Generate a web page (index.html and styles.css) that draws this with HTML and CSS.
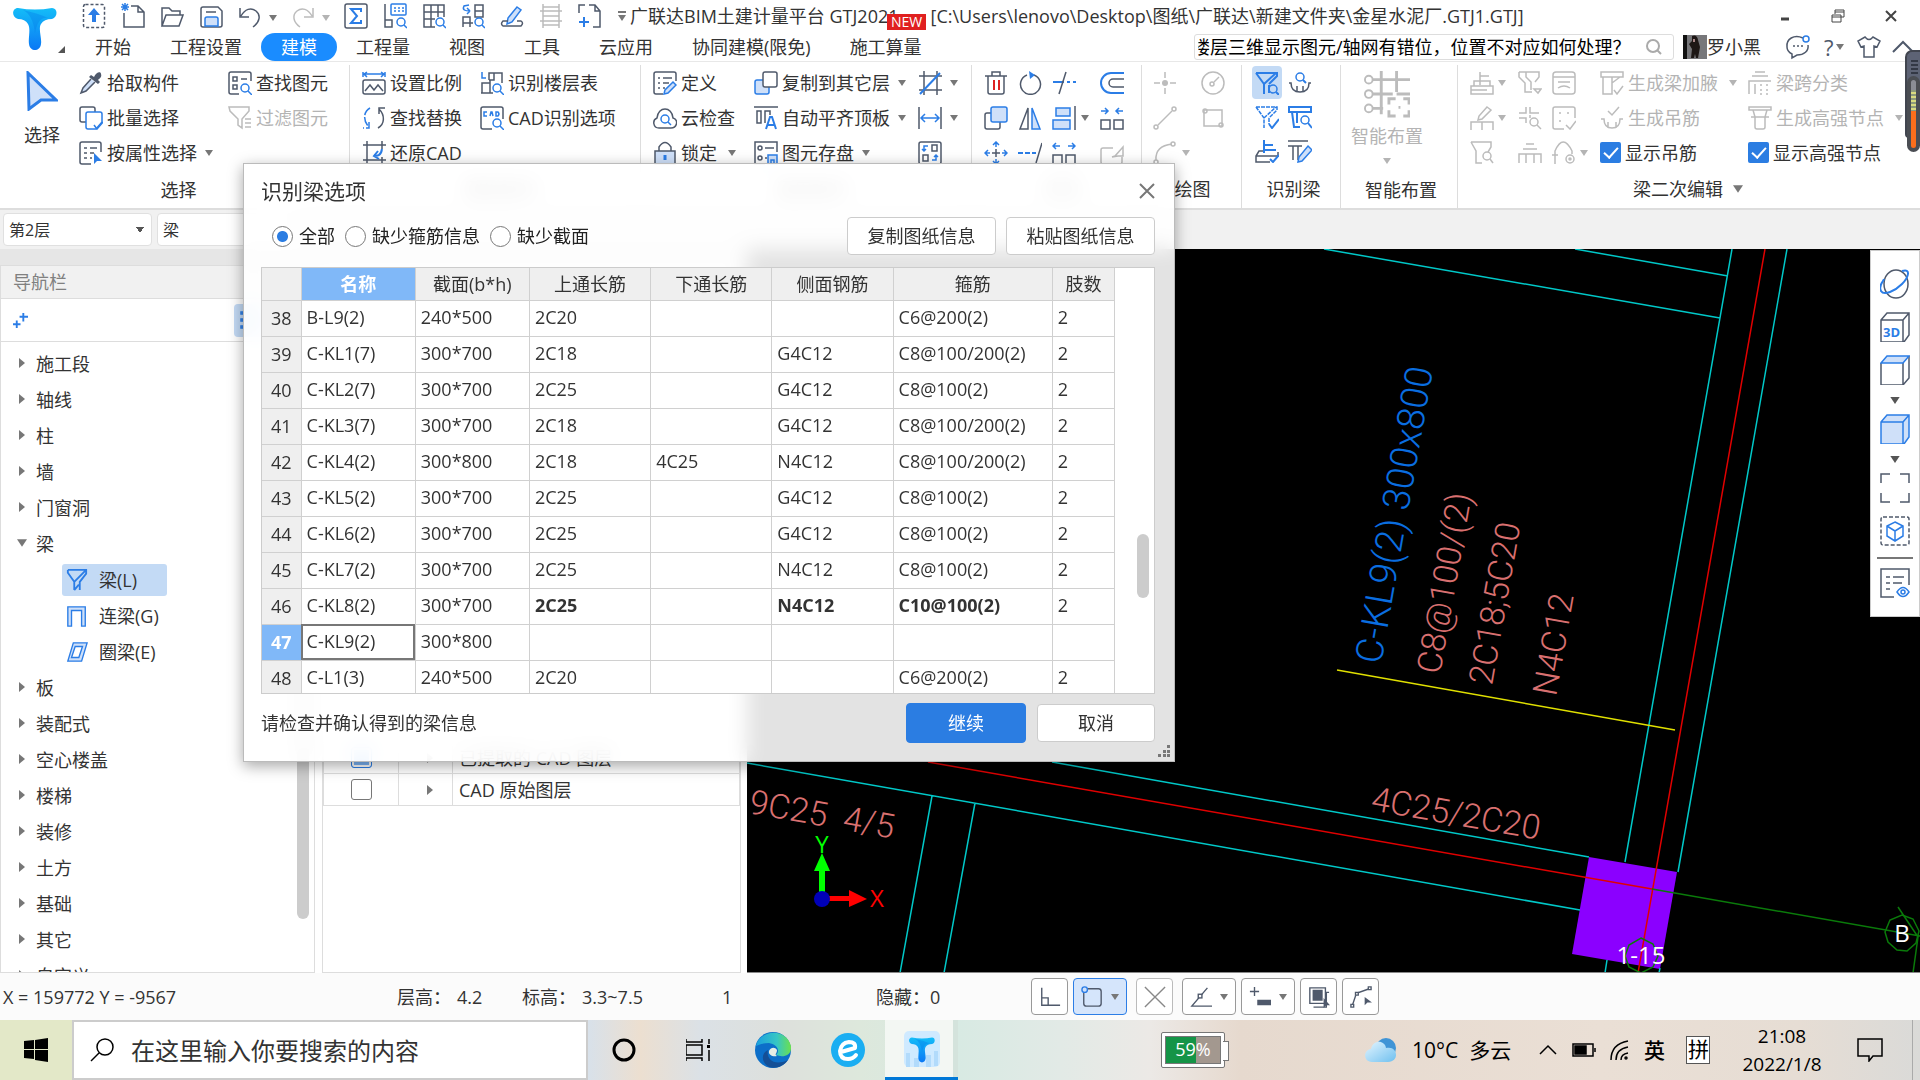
FILE: index.html
```html
<!DOCTYPE html>
<html lang="zh-CN">
<head>
<meta charset="utf-8">
<title>广联达BIM土建计量平台</title>
<link rel="stylesheet" href="styles.css">
</head>
<body>
<svg class="defs" aria-hidden="true">
<defs>
<linearGradient id="tg" x1="0" y1="0" x2="0" y2="1"><stop offset="0" stop-color="#14bdf8"/><stop offset="1" stop-color="#0b78f5"/></linearGradient>
<linearGradient id="eg" x1="0" y1="0" x2="1" y2="0"><stop offset="0" stop-color="#1ba0de"/><stop offset=".6" stop-color="#36c6c4"/><stop offset="1" stop-color="#6be04e"/></linearGradient>
<linearGradient id="cg" x1="0" y1="0" x2="1" y2="1"><stop offset="0" stop-color="#e4f5ff"/><stop offset="1" stop-color="#6fc0ef"/></linearGradient>
<symbol id="upload" viewBox="0 0 24 26"><rect class="g" x="1.500" y="1.500" width="21" height="23" rx="2" stroke-dasharray="3 2"/><path class="bf" d="M12 5l6 7h-4v7h-4v-7H6z"/></symbol>
<symbol id="new" viewBox="0 0 24 26"><path class="g" d="M10 3h7l6 6v15H3V10M17 3v6h6"/><path class="b" d="M1 1l6 6M7 1L1 7M4 0v8M0 4h8"/></symbol>
<symbol id="open" viewBox="0 0 24 26"><path class="g" d="M2 23V5h7l3 3h8v4M2 23L6 12h17l-4 11z"/></symbol>
<symbol id="save" viewBox="0 0 24 26"><path class="g" d="M4 4h15l4 4v14a2 2 0 0 1-2 2H4a2 2 0 0 1-2-2V6a2 2 0 0 1 2-2zM7 9h10"/><path class="b f" d="M6 23v-7a2 2 0 0 1 2-2h9a2 2 0 0 1 2 2v7z"/></symbol>
<symbol id="undo" viewBox="0 0 24 26"><path class="g" d="M2 5v9h9M3 13C7 6 13 4 18 8s4 11-3 16"/></symbol>
<symbol id="redo" viewBox="0 0 24 26"><path class="g" d="M22 5v9h-9M21 13C17 6 11 4 6 8s-4 11 3 16"/></symbol>
<symbol id="sum" viewBox="0 0 24 26"><rect class="g" x="1" y="1" width="22" height="24" rx="2"/><path class="b" d="M17 9V6H7l6 7-6 7h10v-3" stroke-width="2"/></symbol>
<symbol id="layer-q" viewBox="0 0 24 26"><path class="g" d="M2 1v23h7v-7H2"/><rect class="b" x="8" y="1" width="15" height="11" rx="1"/><path class="b" d="M11 5h2m2 0h2m2 0h2M11 8h2m2 0h2m2 0h2"/><circle class="b" cx="18" cy="19" r="4"/><path class="b" d="M21 22l3 3"/></symbol>
<symbol id="grid-q" viewBox="0 0 24 26"><path class="g" d="M13 24H2V2h20v12M2 9h20M2 16h11M9 2v22M16 2v12"/><circle class="b" cx="18" cy="19" r="4"/><path class="b" d="M21 22l3 3"/></symbol>
<symbol id="swap-q" viewBox="0 0 24 26"><path class="g" d="M14 2h8v12h-8zM14 8h8M2 24V14h7v10M2 20h10"/><path class="b" d="M9 8c-5 0-8-1-6-5l5-1M9 8L6 5m3 3l-3 3"/><circle class="b" cx="18" cy="19" r="4"/><path class="b" d="M21 22l3 3"/></symbol>
<symbol id="pencil" viewBox="0 0 24 26"><path class="b f" d="M17 4l4 3-9 12-5 2 1-6z"/><path class="g" d="M8 18H3q-3 3 0 5h18q3-3 0-5h-4"/></symbol>
<symbol id="ladder" viewBox="0 0 24 26"><path class="g" d="M4 1v24M20 1v24M4 4h16M1 8h22M4 13h16M1 18h22M4 22h16"/></symbol>
<symbol id="addpage" viewBox="0 0 24 26"><path class="g" d="M1 10V2h6M11 2h6l5 6v16h-7M17 2v6h5"/><path class="b" d="M6 14v10M1 19h10" stroke-width="2"/></symbol>
<symbol id="pick" viewBox="0 0 24 24"><path class="gf" d="M12 4l3 2c2-5 7-6 7-3 1 3-1 4-3 6l2 2-2 2-9-7z"/><path class="g f" d="M12 8L4 17l-2 5 5-2 9-9"/></symbol>
<symbol id="multi" viewBox="0 0 24 24"><rect class="g" x="1" y="1" width="15" height="15" rx="2"/><path class="b w" d="M9 6h12a2 2 0 0 1 2 2v8l-6 7H9a2 2 0 0 1-2-2V8a2 2 0 0 1 2-2z"/><path class="b" d="M15 19l3 4 6-7"/></symbol>
<symbol id="prop" viewBox="0 0 24 24"><path class="g" d="M12 23H3a2 2 0 0 1-2-2V3a2 2 0 0 1 2-2h17a2 2 0 0 1 2 2v8M5 7h3m3 0h7M5 12h3m3 0h4M5 17h3m3 0h2"/><path class="bf" d="M15 12v11l3-3h5z"/></symbol>
<symbol id="find" viewBox="0 0 24 24"><path class="g" d="M11 23H3a2 2 0 0 1-2-2V3a2 2 0 0 1 2-2h18a2 2 0 0 1 2 2v7M5 6h4v4H5zM5 14h4v4H5zM13 8h6"/><circle class="b" cx="17" cy="17" r="4"/><path class="b" d="M20 20l4 4"/></symbol>
<symbol id="filter" viewBox="0 0 24 24"><path class="g" d="M1 1h20v4l-7 8v9l-4-3v-6L2 5zM17 13h6m-6 4h6m-6 4h6"/></symbol>
<symbol id="scale" viewBox="0 0 24 24"><path class="b" d="M1 1v5m22-5v5M2 3h20M5 1L2 3l3 3M19 1l3 2-3 3"/><rect class="g" x="1" y="9" width="22" height="14" rx="2"/><path class="g" d="M3 20l5-6 4 5 4-5 5 6"/></symbol>
<symbol id="replace" viewBox="0 0 24 24"><path class="b" d="M8 2C1 6 1 15 7 21m0-5v6H1" stroke-dasharray="9 2"/><path class="g" d="M16 22c7-4 7-13 1-19m0 5V2h6"/></symbol>
<symbol id="restore" viewBox="0 0 24 24"><path class="g" d="M5 0v22M1 4h23M20 0v8M1 19h23M20 16v8"/><path class="b" d="M20 8c-1 7-5 7-8 7m4-5l-4 5 5 3" stroke-width="2"/></symbol>
<symbol id="floors" viewBox="0 0 24 24"><path class="b" d="M2 1v6h4"/><path class="g" d="M9 9V2h13v10M9 9h5V2M2 22V12h8v10M1 22h12M10 12V9"/><circle class="b" cx="17" cy="17" r="4"/><path class="b" d="M20 20l4 4"/></symbol>
<symbol id="cad" viewBox="0 0 24 24"><path class="g" d="M12 23H3a2 2 0 0 1-2-2V3a2 2 0 0 1 2-2h18a2 2 0 0 1 2 2v10"/><path class="b" d="M7 6H4v4h3M10 10l1-4h1l1 4M16 6v4h2q2-2 0-4z"/><circle class="b" cx="17" cy="17" r="4"/><path class="b" d="M20 20l4 4"/></symbol>
<symbol id="define" viewBox="0 0 24 24"><path class="g" d="M10 23H3a2 2 0 0 1-2-2V3a2 2 0 0 1 2-2h18a2 2 0 0 1 2 2v7M5 7h2m3 0h9M5 12h2m3 0h6M5 17h2m3 0h2"/><path class="b f" d="M20 11l3 3-8 8-4 1 1-4z"/></symbol>
<symbol id="cloud" viewBox="0 0 24 24"><path class="g" d="M6 22c-6 0-7-8-2-10C5 0 19 0 20 12c6 2 4 10-2 10z"/><circle class="b" cx="12" cy="13" r="4"/><path class="b" d="M15 16l3 3"/></symbol>
<symbol id="lock" viewBox="0 0 24 24"><path class="g f" d="M2 10h20v13H2z"/><path class="g" d="M6 10V6q6-9 12 0v4"/><path class="b" d="M12 14v5" stroke-width="3"/></symbol>
<symbol id="copyto" viewBox="0 0 24 24"><path class="b f" d="M10 9H3a2 2 0 0 0-2 2v10a2 2 0 0 0 2 2h10a2 2 0 0 0 2-2v-5z"/><rect class="g w" x="9" y="1" width="14" height="15" rx="2"/></symbol>
<symbol id="align" viewBox="0 0 24 24"><path class="g" d="M0 1h24M3 5h4v12H3zM11 17V5h5v4"/><path class="b" d="M12 23l4-12h2l4 12M14 19h7" stroke-width="2"/></symbol>
<symbol id="store" viewBox="0 0 24 24"><path class="g" d="M11 23H1V1h22v10M11 7h9M11 17h2"/><rect class="g" x="4" y="5" width="4" height="4" rx="2"/><rect class="g" x="4" y="15" width="4" height="4" rx="2"/><path class="b f" d="M14 14h9v9h-9zM17 23v-4h3v4"/></symbol>
<symbol id="axis" viewBox="0 0 24 24"><path class="g" d="M6 0v24M19 0v24M1 5h23M1 19h23"/><path class="b" d="M2 23L22 2" stroke-width="2"/></symbol>
<symbol id="dim" viewBox="0 0 24 24"><path class="g" d="M1 1v22M23 1v22"/><path class="b" d="M3 12h18M7 8l-4 4 4 4M17 8l4 4-4 4"/></symbol>
<symbol id="convert" viewBox="0 0 24 24"><rect class="g" x="1" y="1" width="22" height="22" rx="2"/><path class="g" d="M14 4h5v6h-5zM5 14h5v6H5z"/><path class="b" d="M10 5H6v5m-2-2l2 2 2-2M14 19h4v-5m-2 2l2-2 2 2"/></symbol>
<symbol id="trash" viewBox="0 0 24 24"><path class="g" d="M1 5h22M8 5V1h8v4M4 5v16a2 2 0 0 0 2 2h12a2 2 0 0 0 2-2V5"/><path class="r" d="M10 9v10M15 9v10"/></symbol>
<symbol id="rotate" viewBox="0 0 24 24"><path class="g" d="M9 4a10 10 0 1 0 7 0"/><path class="bf" d="M11 0l6 4-5 4z"/></symbol>
<symbol id="trim" viewBox="0 0 24 24"><path class="b" d="M1 11h11m3 0h3m3 0h3" stroke-width="2"/><path class="g" d="M14 1L7 23"/></symbol>
<symbol id="offset" viewBox="0 0 24 24"><path class="b" d="M24 2H11a10 10 0 0 0 0 20h13" stroke-width="2"/><path class="g" d="M24 8H13a4 4 0 0 0 0 8h11"/></symbol>
<symbol id="copy" viewBox="0 0 24 24"><rect class="g" x="1" y="7" width="15" height="16" rx="2"/><rect class="b f" x="7" y="1" width="16" height="15" rx="2"/></symbol>
<symbol id="mirror" viewBox="0 0 24 24"><path class="g" d="M10 2v21H2z"/><path class="b f" d="M14 2v21h8z"/></symbol>
<symbol id="alignr" viewBox="0 0 24 24"><rect class="b f" x="4" y="2" width="14" height="8"/><rect class="b f" x="1" y="14" width="17" height="9"/><path class="g" d="M23 0v24"/></symbol>
<symbol id="merge" viewBox="0 0 24 24"><path class="g" d="M1 14h9v9H1zM14 14h9v9h-9z"/><path class="b" d="M1 5h7M5 2l3 3-3 3M23 5h-7M19 2l-3 3 3 3"/></symbol>
<symbol id="split" viewBox="0 0 24 24"><path class="g" d="M1 14h9v9H1zM14 14h9v9h-9z"/><path class="b" d="M1 5h7M4 2L1 5l3 3M23 5h-7M20 2l3 3-3 3"/></symbol>
<symbol id="move" viewBox="0 0 24 24"><path class="g" d="M12 8v8M8 12h8"/><path class="b" d="M12 6V1M9 4l3-3 3 3M12 18v5m-3-3l3 3 3-3M6 12H1m3-3l-3 3 3 3M18 12h5m-3-3l3 3-3 3"/></symbol>
<symbol id="extend" viewBox="0 0 24 24"><path class="b" d="M0 12h5m2 0h5m2 0h4" stroke-width="2"/><path class="g" d="M24 2l-6 20"/></symbol>
<symbol id="editbox" viewBox="0 0 24 24"><path class="g" d="M13 7H3q-2 0-2 2v12q0 2 2 2h17q2 0 2-2v-5M12 16l3-1 8-9v9h-5z"/></symbol>
<symbol id="point" viewBox="0 0 24 24"><path class="g" d="M12 1v6m0 10v6M1 12h6m10 0h6"/><circle class="gf" cx="12" cy="12" r="3"/></symbol>
<symbol id="circle" viewBox="0 0 24 24"><circle class="g" cx="12" cy="12" r="11"/><circle class="g" cx="11" cy="13" r="2"/><path class="g" d="M13 11l5-5"/></symbol>
<symbol id="line" viewBox="0 0 24 24"><path class="g" d="M5 19L19 5"/><circle class="g" cx="3" cy="21" r="2"/><circle class="g" cx="21" cy="3" r="2"/></symbol>
<symbol id="rect" viewBox="0 0 24 24"><rect class="g" x="3" y="4" width="18" height="16"/><circle class="g" cx="4" cy="5" r="2"/><circle class="g" cx="20" cy="19" r="2"/></symbol>
<symbol id="arc" viewBox="0 0 24 24"><path class="g" d="M3 19Q2 5 19 3"/><circle class="g" cx="3" cy="21" r="2"/><circle class="g" cx="20" cy="3" r="2"/></symbol>
<symbol id="beam-q" viewBox="0 0 24 24"><path class="b" d="M1 2h21v3l-8 8M1 2l8 11v10M9 13l12-11M14 14v8" stroke-width="2"/><circle class="b" cx="18" cy="18" r="4"/><path class="b" d="M21 21l3 3" stroke-width="2"/></symbol>
<symbol id="beam-c" viewBox="0 0 24 24"><path class="b" d="M1 2h21v3l-8 8M1 2l8 11v10M9 13l12-11M14 13v6" stroke-dasharray="4 1"/><path class="b" d="M14 19l3 4 7-9" stroke-width="2"/></symbol>
<symbol id="stamp" viewBox="0 0 24 24"><path class="g" d="M9 12H4l-3 5v6h14M1 17h22v-4"/><path class="b" d="M9 14V1M9 6h9M9 11h12M15 20l3 3 6-7" stroke-width="2"/></symbol>
<symbol id="hang-q" viewBox="0 0 24 24"><path class="g" d="M1 12h2q0 9 9 9t9-9h2M9 21v-6m6 6v-6"/><circle class="b" cx="12" cy="6" r="4"/><path class="b" d="M15 9l3 3" stroke-width="2"/></symbol>
<symbol id="plate-q" viewBox="0 0 24 24"><path class="b" d="M1 2h22v5H1zM4 7l2 15h6M9 7v11" stroke-width="2"/><circle class="b" cx="17" cy="15" r="4"/><path class="b" d="M20 18l4 5" stroke-width="2"/></symbol>
<symbol id="t-edit" viewBox="0 0 24 24"><path class="g" d="M0 2h20M0 7h14M5 7v14M10 7v14"/><path class="b f" d="M20 7l4 4-10 11-4 1 1-5z"/></symbol>
<symbol id="smart" viewBox="0 0 48 48"><path class="g" d="M18 0v45M34 0v22M8 9h40M8 24h18M8 39h12M26 24h4M34 24h14" stroke-width="3"/><circle class="g w" cx="5" cy="9" r="4" stroke-width="2"/><circle class="g w" cx="5" cy="24" r="4" stroke-width="2"/><circle class="g w" cx="5" cy="39" r="4" stroke-width="2"/><path class="g" d="M26 35v-6h7M41 29h6v6M47 41v6h-6M33 47h-7v-6M36 38h2" stroke-width="3"/></symbol>
<symbol id="s1" viewBox="0 0 24 24"><path class="g" d="M10 14V1M10 5h9M4 10h16v5H4zM1 15h22v8H1zM1 19h16"/></symbol>
<symbol id="s2" viewBox="0 0 24 24"><path class="g" d="M1 1h20v5l-4 5M1 1v5l6 6v9h7M8 1v5l5 5v8M16 18h7l-3 4z"/></symbol>
<symbol id="s3" viewBox="0 0 24 24"><rect class="g" x="1" y="1" width="22" height="22" rx="3"/><path class="g" d="M1 6h22M6 11h12M6 17q6-4 12 0"/></symbol>
<symbol id="s4" viewBox="0 0 24 24"><path class="g" d="M17 1l4 3-9 9-4 1 1-4zM1 24v-8h22v8M12 16v8"/></symbol>
<symbol id="s5" viewBox="0 0 24 24"><path class="g" d="M1 7h7V1M12 1v6h9M1 12h7v5M12 12V9"/><circle class="g" cx="16" cy="16" r="4"/><path class="g" d="M19 19l4 4"/></symbol>
<symbol id="s6" viewBox="0 0 24 24"><path class="g" d="M12 23H3a2 2 0 0 1-2-2V3a2 2 0 0 1 2-2h18a2 2 0 0 1 2 2v9M7 7h2m6 0h2M7 15h2M14 19l4 4 6-8"/></symbol>
<symbol id="s7" viewBox="0 0 24 24"><path class="g" d="M1 1h20v5l-3 5M1 1l5 9v12h6"/><circle class="g" cx="17" cy="15" r="4"/><path class="g" d="M20 18l3 4"/></symbol>
<symbol id="s8" viewBox="0 0 24 24"><path class="g" d="M8 3h8M5 8h14M1 22v-9h22v9M8 13v9m8-9v9"/></symbol>
<symbol id="s9" viewBox="0 0 24 24"><path class="g" d="M3 23V10q8-18 17 0v3M0 14h6"/><circle class="g" cx="18" cy="18" r="4"/><circle class="g" cx="18" cy="18" r="1"/></symbol>
<symbol id="s10" viewBox="0 0 24 24"><path class="g" d="M1 1h22v5H1zM3 6v17h9V6M12 12l8-6M14 19l3 4 6-8"/></symbol>
<symbol id="s11" viewBox="0 0 24 24"><path class="g" d="M1 13h3q0 9 8 9t8-9h3M8 22v-6m8 6v-6M8 5l4 4 7-8"/></symbol>
<symbol id="s12" viewBox="0 0 24 24"><path class="g" d="M7 1h10M4 5h16M1 23V10h22M7 23V13M12 14h2m4 0h2m-8 5h2m4 0h2m-8 4h2m4 0h2"/></symbol>
<symbol id="s13" viewBox="0 0 24 24"><path class="g" d="M1 1h22v3H1zM5 4l2 7h10l2-7M7 11v10q0 2 2 2h6q2 0 2-2V11M3 11h18"/></symbol>
<symbol id="beam" viewBox="0 0 24 24"><path class="b" d="M2 1h20v4l-7 9v9M2 1v3l7 10v9M22 1L9 14M9 23l5-6" stroke-width="2"/></symbol>
<symbol id="lbeam" viewBox="0 0 24 24"><path class="b f" d="M2 23V2h19v21h-4V6H6v17z"/></symbol>
<symbol id="rbeam" viewBox="0 0 24 24"><path class="b f" d="M8 2h15l-6 20H2zM10 6L6 18h8l4-12z" fill-rule="evenodd"/></symbol>
<symbol id="orbit" viewBox="0 0 30 30"><ellipse class="g" cx="16" cy="15" rx="12" ry="14"/><path class="b" d="M22 2c9-3 7 6 0 13S4 27 1 22s2-9 3-12" stroke-width="2"/></symbol>
<symbol id="box3d" viewBox="0 0 30 30"><path class="g" d="M1 8l6-7h22v22l-5 7H1zM1 8h22v22M23 8l6-7"/></symbol>
<symbol id="boxtop" viewBox="0 0 30 30"><path class="g" d="M1 8v22h22l6-7V1M23 8v22"/><path class="b f" d="M1 8l6-7h22l-6 7z"/></symbol>
<symbol id="boxfull" viewBox="0 0 30 30"><path class="b f" d="M1 8l6-7h22v22l-5 7H1zM1 8h22v22M23 8l6-7"/></symbol>
<symbol id="full" viewBox="0 0 30 30"><path class="g" d="M1 10V1h9M20 1h9v9M29 20v9h-9M10 29H1v-9"/></symbol>
<symbol id="boxsel" viewBox="0 0 30 30"><rect class="g" x="1" y="1" width="28" height="28" rx="2" stroke-dasharray="4 2"/><path class="b" d="M15 6l8 4v10l-8 5-8-5V10zM7 10l8 5 8-5M15 15v10"/></symbol>
<symbol id="listeye" viewBox="0 0 30 30"><path class="g" d="M14 29H1V1h28v16M6 9h4m3 0h11M6 15h4m3 0h9M6 21h4"/><path class="b" d="M17 24q6-9 12 0-6 9-12 0z"/><circle class="b" cx="23" cy="24" r="2"/></symbol>
<symbol id="tri" viewBox="0 0 8 6"><path d="M0 0h8L4 6z" fill="currentColor"/></symbol>
<symbol id="triR" viewBox="0 0 6 10"><path d="M0 0l6 5-6 5z" fill="currentColor"/></symbol>
<symbol id="logo" viewBox="0 0 44 44"><path fill="url(#tg)" d="M5 1q17 3 34 0c6 0 6 9 0 11q-8 0-11 5c-3 5 1 14 0 20-1 8-11 8-12 0-1-6 2-15-1-20q-3-5-10-5C-2 10-1 1 5 1z"/><path d="M10 3q14 3 25 8-10-2-13 15-2-18-12-23z" fill="#0680e8" opacity=".4"/></symbol>
</defs>
</svg>

<header class="titlebar">
  <svg class="logo"><use href="#logo"/></svg>
  <nav class="quick" aria-label="快速访问">
    <svg class="qi"><use href="#upload"/></svg><svg class="qi"><use href="#new"/></svg><svg class="qi"><use href="#open"/></svg><svg class="qi"><use href="#save"/></svg>
    <span class="qd"><svg class="qi"><use href="#undo"/></svg><svg class="tri"><use href="#tri"/></svg></span>
    <span class="qd off"><svg class="qi"><use href="#redo"/></svg><svg class="tri"><use href="#tri"/></svg></span>
    <svg class="qi"><use href="#sum"/></svg><svg class="qi"><use href="#layer-q"/></svg><svg class="qi"><use href="#grid-q"/></svg><svg class="qi"><use href="#swap-q"/></svg><svg class="qi"><use href="#pencil"/></svg>
    <svg class="qi off"><use href="#ladder"/></svg><svg class="qi"><use href="#addpage"/></svg>
  </nav>
  <span class="morearrow"><svg class="tri"><use href="#tri"/></svg></span>
  <h1 class="apptitle"><span>广联达BIM土建计量平台 GTJ2021</span><span class="path">[C:\Users\lenovo\Desktop\图纸\广联达\新建文件夹\金星水泥厂.GTJ1.GTJ]</span><span class="new">NEW</span></h1>
  <div class="winbtns">
    <button aria-label="最小化"><svg viewBox="0 0 14 14"><path d="M3 10h8" stroke-width="3"/></svg></button>
    <button aria-label="还原"><svg viewBox="0 0 14 14"><path d="M4 5V1h9v7h-3M4 3h9M1 6h9v7H1zM1 8h9"/></svg></button>
    <button aria-label="关闭"><svg viewBox="0 0 14 14"><path d="M2 2l10 10M12 2L2 12" stroke-width="2"/></svg></button>
  </div>
</header>

<div class="tabbar">
  <svg class="cornertri" viewBox="0 0 7 7"><path d="M7 0v7H0z" fill="#555"/></svg>
  <nav class="tabs"><a href="#">开始</a><a href="#">工程设置</a><a href="#" class="on">建模</a><a href="#">工程量</a><a href="#">视图</a><a href="#">工具</a><a href="#">云应用</a><a href="#">协同建模(限免)</a><a href="#">施工算量</a></nav>
  <label class="ask"><input type="text" aria-label="搜索问题" value="楼层三维显示图元/轴网有错位，位置不对应如何处理？"><svg viewBox="0 0 16 16"><circle cx="7" cy="7" r="6"/><path d="M11 11l4 4"/></svg></label>
  <svg class="avatar" viewBox="0 0 24 24"><path fill="#77777a" d="M0 0h24v24H0z"/><path fill="#111" d="M0 0h4v24H0z"/><path fill="#1d1715" d="M9 1q5-2 6 4l2 7-2 11h-2l-1-4-1 4H8l1-9-3-5 3-3z"/><path fill="#a88" d="M10 4h2v3h-2z"/></svg>
  <span class="user">罗小黑</span>
  <div class="usericons">
    <svg class="ic" viewBox="0 0 24 24"><path class="g" d="M17 3C8-1 0 4 1 12c0 4 3 6 5 7v4l5-3c7 0 12-4 11-10M7 11h2m2 0h2m2 0h2"/><circle class="b" cx="20" cy="4" r="3"/></svg>
    <span class="help">?<svg class="tri"><use href="#tri"/></svg></span>
    <svg class="ic" viewBox="0 0 24 24"><path class="g" d="M8 2q4 5 8 0l7 4-3 6-3-1v11H7V11l-3 1-3-6z"/></svg>
    <svg class="ic chev" viewBox="0 0 24 24"><path class="g" d="M2 17L12 7l10 10" stroke-width="2"/></svg>
  </div>
</div>

<section class="ribbon">
  <div class="group g1">
    <div class="tools">
      <button class="big"><svg class="cursor" viewBox="0 0 32 40"><path class="b f" d="M2 2l28 27H15L3 38z" stroke-width="3"/></svg>选择</button>
      <div class="col"><button class="tool"><svg class="ic"><use href="#pick"/></svg>拾取构件</button><button class="tool"><svg class="ic"><use href="#multi"/></svg>批量选择</button><button class="tool"><svg class="ic"><use href="#prop"/></svg>按属性选择<svg class="tri"><use href="#tri"/></svg></button></div>
      <div class="col"><button class="tool"><svg class="ic"><use href="#find"/></svg>查找图元</button><button class="tool off"><svg class="ic"><use href="#filter"/></svg>过滤图元</button></div>
    </div>
    <div class="glabel">选择</div>
  </div>
  <div class="group g2">
    <div class="tools">
      <div class="col"><button class="tool"><svg class="ic"><use href="#scale"/></svg>设置比例</button><button class="tool"><svg class="ic"><use href="#replace"/></svg>查找替换</button><button class="tool"><svg class="ic"><use href="#restore"/></svg>还原CAD</button></div>
      <div class="col"><button class="tool"><svg class="ic"><use href="#floors"/></svg>识别楼层表</button><button class="tool"><svg class="ic"><use href="#cad"/></svg>CAD识别选项</button></div>
    </div>
    <div class="glabel">图纸操作</div>
  </div>
  <div class="group g3">
    <div class="tools">
      <div class="col"><button class="tool"><svg class="ic"><use href="#define"/></svg>定义</button><button class="tool"><svg class="ic"><use href="#cloud"/></svg>云检查</button><button class="tool"><svg class="ic"><use href="#lock"/></svg>锁定<svg class="tri wider"><use href="#tri"/></svg></button></div>
      <div class="col"><button class="tool"><svg class="ic"><use href="#copyto"/></svg>复制到其它层<svg class="tri"><use href="#tri"/></svg></button><button class="tool"><svg class="ic"><use href="#align"/></svg>自动平齐顶板<svg class="tri"><use href="#tri"/></svg></button><button class="tool"><svg class="ic"><use href="#store"/></svg>图元存盘<svg class="tri"><use href="#tri"/></svg></button></div>
      <div class="col"><button class="tool"><svg class="ic"><use href="#axis"/></svg><svg class="tri"><use href="#tri"/></svg></button><button class="tool"><svg class="ic"><use href="#dim"/></svg><svg class="tri"><use href="#tri"/></svg></button><button class="tool"><svg class="ic"><use href="#convert"/></svg></button></div>
    </div>
    <div class="glabel">通用操作</div>
  </div>
  <div class="group g4">
    <div class="tools">
      <div class="col"><button class="tool"><svg class="ic"><use href="#trash"/></svg></button><button class="tool"><svg class="ic"><use href="#copy"/></svg></button><button class="tool"><svg class="ic"><use href="#move"/></svg></button></div>
      <div class="col"><button class="tool"><svg class="ic"><use href="#rotate"/></svg></button><button class="tool"><svg class="ic"><use href="#mirror"/></svg></button><button class="tool"><svg class="ic"><use href="#extend"/></svg></button></div>
      <div class="col"><button class="tool"><svg class="ic"><use href="#trim"/></svg></button><button class="tool"><svg class="ic"><use href="#alignr"/></svg><svg class="tri"><use href="#tri"/></svg></button><button class="tool"><svg class="ic"><use href="#split"/></svg></button></div>
      <div class="col"><button class="tool"><svg class="ic"><use href="#offset"/></svg></button><button class="tool"><svg class="ic"><use href="#merge"/></svg></button><button class="tool off"><svg class="ic"><use href="#editbox"/></svg></button></div>
    </div>
    <div class="glabel">修改</div>
  </div>
  <div class="group g5 off">
    <div class="tools">
      <div class="col"><button class="tool"><svg class="ic"><use href="#point"/></svg></button><button class="tool"><svg class="ic"><use href="#line"/></svg></button><button class="tool"><svg class="ic"><use href="#arc"/></svg><svg class="tri"><use href="#tri"/></svg></button></div>
      <div class="col"><button class="tool"><svg class="ic"><use href="#circle"/></svg></button><button class="tool"><svg class="ic"><use href="#rect"/></svg></button></div>
    </div>
    <div class="glabel">绘图</div>
  </div>
  <div class="group g6">
    <div class="tools">
      <div class="col"><button class="tool active"><svg class="ic"><use href="#beam-q"/></svg></button><button class="tool"><svg class="ic"><use href="#beam-c"/></svg></button><button class="tool"><svg class="ic"><use href="#stamp"/></svg></button></div>
      <div class="col"><button class="tool"><svg class="ic"><use href="#hang-q"/></svg></button><button class="tool"><svg class="ic"><use href="#plate-q"/></svg></button><button class="tool"><svg class="ic"><use href="#t-edit"/></svg></button></div>
    </div>
    <div class="glabel">识别梁</div>
  </div>
  <div class="group g7">
    <div class="tools"><button class="big off"><svg class="smart"><use href="#smart"/></svg>智能布置<svg class="tri"><use href="#tri"/></svg></button></div>
    <div class="glabel">智能布置</div>
  </div>
  <div class="group g8">
    <div class="tools">
      <div class="col off"><button class="tool"><svg class="ic"><use href="#s1"/></svg><svg class="tri"><use href="#tri"/></svg></button><button class="tool"><svg class="ic"><use href="#s4"/></svg><svg class="tri"><use href="#tri"/></svg></button><button class="tool"><svg class="ic"><use href="#s7"/></svg></button></div>
      <div class="col off"><button class="tool"><svg class="ic"><use href="#s2"/></svg></button><button class="tool"><svg class="ic"><use href="#s5"/></svg></button><button class="tool"><svg class="ic"><use href="#s8"/></svg></button></div>
      <div class="col off"><button class="tool"><svg class="ic"><use href="#s3"/></svg></button><button class="tool"><svg class="ic"><use href="#s6"/></svg></button><button class="tool"><svg class="ic"><use href="#s9"/></svg><svg class="tri"><use href="#tri"/></svg></button></div>
      <div class="col"><button class="tool off"><svg class="ic"><use href="#s10"/></svg>生成梁加腋<svg class="tri wider"><use href="#tri"/></svg></button><button class="tool off"><svg class="ic"><use href="#s11"/></svg>生成吊筋</button><label class="tool"><input type="checkbox" class="chk" checked>显示吊筋</label></div>
      <div class="col"><button class="tool off"><svg class="ic"><use href="#s12"/></svg>梁跨分类</button><button class="tool off"><svg class="ic"><use href="#s13"/></svg>生成高强节点<svg class="tri wider"><use href="#tri"/></svg></button><label class="tool"><input type="checkbox" class="chk" checked>显示高强节点</label></div>
    </div>
    <div class="glabel">梁二次编辑<svg class="tri"><use href="#tri"/></svg></div>
  </div>
</section>

<div class="selectors">
  <select aria-label="楼层"><option>第2层</option></select>
  <select aria-label="构件类型"><option>梁</option></select>
</div>

<main class="work">
  <aside class="side">
    <div class="strip"></div>
    <div class="panels">
      <section class="nav">
        <h2>导航栏</h2>
        <div class="navbar"><svg class="plus" viewBox="0 0 16 16"><path d="M11 0v9M7 4h9M4 8v8M0 12h8"/></svg><button class="listbtn" aria-label="列表"><svg viewBox="0 0 16 20"><path d="M1 2h2v2H1zM1 9h2v2H1zM1 16h2v2H1z"/></svg></button></div>
        <div class="treewrap">
        <ul class="tree">
          <li><svg><use href="#triR"/></svg>施工段</li><li><svg><use href="#triR"/></svg>轴线</li><li><svg><use href="#triR"/></svg>柱</li><li><svg><use href="#triR"/></svg>墙</li><li><svg><use href="#triR"/></svg>门窗洞</li>
          <li class="openrow"><svg><use href="#tri"/></svg>梁</li>
          <li class="leaf"><a href="#" class="sel"><svg class="ic"><use href="#beam"/></svg>梁(L)</a></li>
          <li class="leaf"><a href="#"><svg class="ic"><use href="#lbeam"/></svg>连梁(G)</a></li>
          <li class="leaf"><a href="#"><svg class="ic"><use href="#rbeam"/></svg>圈梁(E)</a></li>
          <li><svg><use href="#triR"/></svg>板</li><li><svg><use href="#triR"/></svg>装配式</li><li><svg><use href="#triR"/></svg>空心楼盖</li><li><svg><use href="#triR"/></svg>楼梯</li><li><svg><use href="#triR"/></svg>装修</li><li><svg><use href="#triR"/></svg>土方</li><li><svg><use href="#triR"/></svg>基础</li><li><svg><use href="#triR"/></svg>其它</li><li><svg><use href="#triR"/></svg>自定义</li>
        </ul>
        <div class="navscroll"></div>
        </div>
      </section>
      <section class="layers">
        <table>
          <tr><td><input type="checkbox" class="box part" aria-label="已提取的 CAD 图层"></td><td><svg class="ex"><use href="#triR"/></svg></td><td>已提取的 CAD 图层</td></tr>
          <tr><td><input type="checkbox" class="box" aria-label="CAD 原始图层"></td><td><svg class="ex"><use href="#triR"/></svg></td><td>CAD 原始图层</td></tr>
        </table>
      </section>
    </div>
  </aside>
  <section class="canvas">
    <svg class="drawing" viewBox="747 249 1173 724" preserveAspectRatio="xMinYMin slice">
      <path fill="#8b00ff" d="M1589 857l88 15-17 97-88-15z"/>
      <g fill="none" stroke="#00c8c8" stroke-width="1.5">
        <path d="M1324 249l396 69M1575 249l153 27M1732 249L1625 862M1787 249L1678 872M747 763l833 147M1052 762l537 95M932 796l-32 177M975 803l-31 170M1607 960l-2 13M1660 968l-1 5"/>
      </g>
      <path stroke="#e00000" stroke-width="1.5" fill="none" d="M1765 249L1638 973M928 762l724 127"/>
      <path stroke="#e0e000" stroke-width="1.5" d="M1337 670l338 60"/>
      <g stroke="#0a7a0a" stroke-width="1.5" fill="none"><path d="M1652 889l268 47M1898 907l20 30-5 36"/><path d="M1902 915l11 4 6 12-3 12-9 8-10-1-9-8-3-10 5-12z"/><path d="M1641 938l12 6 5 12-5 11-12 6-12-6-4-11 4-11z"/></g>
      <text class="axis" x="1641" y="964" text-anchor="middle">1-15</text>
      <text class="axis" x="1902" y="942" text-anchor="middle">B</text>
      <g class="cad blue"><text transform="translate(1381 665) rotate(-80)">C-KL9(2) 300x800</text></g>
      <g class="cad pink">
        <text transform="translate(1440 675) rotate(-80)">C8@100/(2)</text>
        <text transform="translate(1492 686) rotate(-80)">2C18;5C20</text>
        <text transform="translate(1556 697) rotate(-80)">N4C12</text>
        <text transform="translate(1370 810) rotate(10)">4C25/2C20</text>
        <text transform="translate(748 813) rotate(10)" xml:space="preserve">9C25  4/5</text>
      </g>
      <path fill="#0f0" d="M819 897v-26h-5l8-18 8 18h-5v26z"/><path fill="#f00" d="M826 896h23v-6l18 9-18 8v-6h-23z"/><circle cx="822" cy="899" r="8" fill="#0000b8"/>
      <text x="822" y="853" text-anchor="middle" class="ax" fill="#0f0">Y</text><text x="877" y="907" text-anchor="middle" class="ax" fill="#f00">X</text>
    </svg>
    <div class="viewbar">
      <svg class="vi"><use href="#orbit"/></svg>
      <span class="v3d"><svg class="vi"><use href="#box3d"/></svg><b>3D</b></span>
      <svg class="vi"><use href="#boxtop"/></svg><svg class="tri"><use href="#tri"/></svg>
      <svg class="vi"><use href="#boxfull"/></svg><svg class="tri"><use href="#tri"/></svg>
      <svg class="vi"><use href="#full"/></svg><svg class="vi"><use href="#boxsel"/></svg>
      <hr><svg class="vi"><use href="#listeye"/></svg>
    </div>
  </section>
</main>

<footer class="status">
  <span class="s-xy">X = 159772 Y = -9567</span><span class="s-h">层高：</span><span class="s-v">4.2</span><span class="s-h2">标高：</span><span class="s-v2">3.3~7.5</span><span class="s-n">1</span><span class="s-hide">隐藏：</span><span class="s-z">0</span>
  <div class="sbtns">
    <button aria-label="正交"><svg class="ic" viewBox="0 0 24 24"><path class="g" d="M3 2v19h20M3 13h7v8"/></svg></button>
    <button class="wide on" aria-label="框选"><svg class="ic" viewBox="0 0 24 24"><rect class="g" x="3" y="3" width="19" height="19" rx="3"/><circle class="b f" cx="4" cy="4" r="3"/></svg><svg class="tri"><use href="#tri"/></svg></button>
    <button class="gapl faint" aria-label="交点"><svg class="ic" viewBox="0 0 24 24"><path class="g" d="M1 1l22 22M23 1L1 23"/></svg></button>
    <button class="wide gapl" aria-label="角度"><svg class="ic" viewBox="0 0 24 24"><path class="g" d="M19 2L2 22h22"/><rect class="g w" x="9" y="9" width="4" height="4"/></svg><svg class="tri"><use href="#tri"/></svg></button>
    <button class="wide" aria-label="偏移"><svg class="ic" viewBox="0 0 24 24"><path class="g" d="M1 6h10M6 1v10"/><path class="gf" d="M9 15h15v6H9z"/></svg><svg class="tri"><use href="#tri"/></svg></button>
    <button aria-label="图层"><svg class="ic" viewBox="0 0 24 24"><path class="g" d="M2 2h17v17H2zM6 23h14V7h3"/><path class="gf" d="M5 4h11v12H5zM17 13v11l3-3h4z"/></svg></button>
    <button aria-label="折线"><svg class="ic" viewBox="0 0 24 24"><path class="g" d="M3 20L7 8l14-5"/><path class="g w" d="M1 20h3v3H1zM20 1h3v3h-3zM6 7h3v3H6z"/><path class="gf" d="M16 12v9l3-3h5z"/></svg></button>
  </div>
</footer>

<div class="taskbar">
  <button class="start" aria-label="开始"><svg viewBox="0 0 24 24"><path d="M0 3l10-1v9H0zM11 2l13-2v11H11zM0 12h10v9L0 20zM11 12h13v12l-13-2z"/></svg></button>
  <label class="tsearch"><svg viewBox="0 0 24 24"><circle cx="15" cy="9" r="8"/><path d="M9 15l-8 8"/></svg><input type="text" placeholder="在这里输入你要搜索的内容" aria-label="搜索"></label>
  <button class="tb" aria-label="Cortana"><svg viewBox="0 0 24 24" class="s24"><circle cx="12" cy="12" r="10" fill="none" stroke="#000" stroke-width="3"/></svg></button>
  <button class="tb" aria-label="任务视图"><svg viewBox="0 0 24 24" class="s24"><path d="M0 1v3h16V1M0 23v-3h16v3M0 7h16v10H0zM23 1v5M23 12v11" fill="none" stroke="#000" stroke-width="1.500"/><path d="M21 7h3v3h-3z"/></svg></button>
  <button class="tb" aria-label="Edge"><svg viewBox="0 0 36 36" class="s36"><circle cx="18" cy="18" r="18" fill="#0c6fc9"/><path d="M1 14C4-2 31-5 36 14c1 9-7 12-15 9 5-5 0-11-7-12-6 0-11 2-13 3z" fill="url(#eg)"/><path d="M13 18c-2 8 5 17 20 10-5 7-13 9-19 7-7-4-9-13-1-17z" fill="#144f96"/><path d="M14 19c2-4 6-4 8-1 0 4-3 4 0 6-4 1-9-1-8-5z" fill="#e5eee6"/></svg></button>
  <button class="tb" aria-label="浏览器"><svg viewBox="0 0 36 36" class="s36"><circle cx="18" cy="18" r="17" fill="#1aaef2"/><path d="M11 20l14-4q1-6-6-6-8 1-9 9 0 8 8 8 5 0 8-4" fill="none" stroke="#fff" stroke-width="4" stroke-linecap="round" stroke-linejoin="round"/></svg></button>
  <button class="tb app" aria-label="广联达"><svg viewBox="0 0 36 36" class="s36"><rect width="36" height="36" rx="5" fill="#cfeaff"/><path d="M2 22h4v14H2zM10 27h5v9h-5zM22 24h5v12h-5zM30 20h4v15h-4z" fill="#b2dbfb"/><use href="#logo" x="5" y="6" width="26" height="26"/></svg></button>
  <div class="power"><span>59%</span></div>
  <svg class="weather" viewBox="0 0 32 26"><circle cx="21" cy="11" r="10" fill="#3f94d6"/><path d="M7 25C-2 25-2 13 6 12 8 2 20 3 21 11c12-3 14 14 2 14z" fill="url(#cg)"/></svg>
  <span class="temp">10°C&nbsp; 多云</span>
  <div class="tray">
    <svg viewBox="0 0 18 24" class="t18"><path d="M1 16l8-8 8 8"/></svg>
    <svg viewBox="0 0 24 24" class="t24"><path d="M1 6h20v12H1zM23 10v4"/><path d="M3 8h11v8H3z" fill="#000"/></svg>
    <svg viewBox="0 0 24 24" class="t24"><path d="M3 22Q3 6 20 3M8 22q0-11 12-13M13 22q0-6 7-7"/><circle cx="18" cy="20" r="1"/></svg>
    <b>英</b><span class="ime">拼</span>
  </div>
  <div class="clock"><time>21:08</time><time>2022/1/8</time></div>
  <svg class="notif" viewBox="0 0 26 24"><path d="M1 1h24v17h-9l-4 5v-5H1z"/></svg>
  <div class="desk"></div>
</div>

<div class="meter"><div class="grille"></div><div class="tube"></div></div>

<form class="dialog" role="dialog" aria-label="识别梁选项">
  <div class="dhead"><h2>识别梁选项</h2><button type="button" class="x" aria-label="关闭"><svg viewBox="0 0 16 16"><path d="M1 1l14 14M15 1L1 15"/></svg></button></div>
  <div class="dopts">
    <label><input type="radio" name="f" checked>全部</label><label><input type="radio" name="f">缺少箍筋信息</label><label><input type="radio" name="f">缺少截面</label>
    <button type="button" class="btn copyb">复制图纸信息</button><button type="button" class="btn">粘贴图纸信息</button>
  </div>
  <div class="gridbox">
    <table class="grid">
      <colgroup><col class="c0"><col class="c1"><col class="c1"><col class="c3"><col class="c3"><col class="c3"><col class="c6"><col class="c7"></colgroup>
      <thead><tr><th></th><th class="hot">名称</th><th>截面(b*h)</th><th>上通长筋</th><th>下通长筋</th><th>侧面钢筋</th><th>箍筋</th><th>肢数</th></tr></thead>
      <tbody>
      <tr><th>38</th><td>B-L9(2)</td><td>240*500</td><td>2C20</td><td></td><td></td><td>C6@200(2)</td><td>2</td></tr>
      <tr><th>39</th><td>C-KL1(7)</td><td>300*700</td><td>2C18</td><td></td><td>G4C12</td><td>C8@100/200(2)</td><td>2</td></tr>
      <tr><th>40</th><td>C-KL2(7)</td><td>300*700</td><td>2C25</td><td></td><td>G4C12</td><td>C8@100(2)</td><td>2</td></tr>
      <tr><th>41</th><td>C-KL3(7)</td><td>300*700</td><td>2C18</td><td></td><td>G4C12</td><td>C8@100/200(2)</td><td>2</td></tr>
      <tr><th>42</th><td>C-KL4(2)</td><td>300*800</td><td>2C18</td><td>4C25</td><td>N4C12</td><td>C8@100/200(2)</td><td>2</td></tr>
      <tr><th>43</th><td>C-KL5(2)</td><td>300*700</td><td>2C25</td><td></td><td>G4C12</td><td>C8@100(2)</td><td>2</td></tr>
      <tr><th>44</th><td>C-KL6(2)</td><td>300*700</td><td>2C25</td><td></td><td>G4C12</td><td>C8@100(2)</td><td>2</td></tr>
      <tr><th>45</th><td>C-KL7(2)</td><td>300*700</td><td>2C25</td><td></td><td>N4C12</td><td>C8@100(2)</td><td>2</td></tr>
      <tr><th>46</th><td>C-KL8(2)</td><td>300*700</td><td><b>2C25</b></td><td></td><td><b>N4C12</b></td><td><b>C10@100(2)</b></td><td>2</td></tr>
      <tr><th class="hot">47</th><td class="cur">C-KL9(2)</td><td>300*800</td><td></td><td></td><td></td><td></td><td></td></tr>
      <tr><th>48</th><td>C-L1(3)</td><td>240*500</td><td>2C20</td><td></td><td></td><td>C6@200(2)</td><td>2</td></tr>
      </tbody>
    </table>
    <div class="thumb"></div>
  </div>
  <div class="dfoot"><p>请检查并确认得到的梁信息</p><button type="button" class="btn primary">继续</button><button type="button" class="btn cancel">取消</button></div>
  <svg class="grip" viewBox="0 0 12 12"><path d="M9 0h3v3H9zM9 5h3v3H9zM9 9h3v3H9zM5 5h3v3H5zM5 9h3v3H5zM0 9h3v3H0z"/></svg>
</form>
</body>
</html>
```
FILE: styles.css
```css
* { box-sizing: border-box; }
body {
  margin: 0; height: 100vh; overflow: hidden; display: flex; flex-direction: column; position: relative;
  font: 18px/24px "Open Sans", "Noto Sans CJK SC", sans-serif; color: #333; background: #fff;
  --g: #4f596b; --b: #2b7de6; --f: #cfe0f9; --w: #fff;
}
button, input, select { font: inherit; color: inherit; }
button { background: none; border: 0; padding: 0; }
h1, h2, p, ul { margin: 0; padding: 0; font-weight: 400; font-size: inherit; list-style: none; }
a { color: inherit; text-decoration: none; }
svg { flex: none; display: block; stroke-width: 1.5; }
.defs { position: absolute; width: 0; height: 0; }
.g { stroke: var(--g); fill: none; }
.b { stroke: var(--b); fill: none; }
.r { stroke: #d22; fill: none; stroke-width: 2; }
.f { fill: var(--f); }
.w { fill: var(--w); }
.bf { fill: var(--b); }
.gf { fill: var(--g); }
.off { --g: #bcbcbc; --b: #bcbcbc; --f: none; color: #b4b4b4; }
.ic { width: 24px; height: 24px; overflow: visible; }
.tri { width: 8px; height: 6px; color: #777; }
.off .tri { color: #b4b4b4; }

/* title bar */
.titlebar { display: flex; height: 32px; align-items: center; flex: none; padding-left: 13px; }
.logo { width: 44px; height: 52px; align-self: flex-start; padding-top: 6px; overflow: visible; }
.quick { display: flex; gap: 15px; margin-left: 25px; }
.qi { width: 24px; height: 26px; }
.qd { display: flex; align-items: center; gap: 7px; width: 38px; }
.qd .tri { margin-top: 4px; }
.morearrow { border-top: 2px solid #777; width: 8px; margin-left: 16px; padding-top: 2px; }
.apptitle { flex: 1; display: flex; white-space: nowrap; margin-left: 4px; }
.path { margin-left: 32px; }
.new { position: absolute; left: 887px; top: 14px; background: #e02020; color: #fff; font-size: 14px; line-height: 16px; padding: 0 4px; }
.winbtns { display: flex; gap: 39px; padding-right: 22px; }
.winbtns svg { width: 14px; height: 14px; fill: none; stroke: #444; stroke-width: 1; }

/* menu tabs */
.tabbar { display: flex; height: 30px; align-items: center; border-bottom: 1px solid #e8e8e8; flex: none; }
.cornertri { width: 7px; height: 7px; margin: 6px 10px 0 58px; }
.tabs { display: flex; flex: 1; }
.tabs a { padding: 2px 20px; line-height: 24px; white-space: nowrap; }
.tabs a + a { margin-left: -1px; }
.tabs .on { background: #1a8cff; color: #fff; border-radius: 14px; }
.ask { display: flex; align-items: center; width: 480px; height: 26px; border: 1px solid #ddd; border-radius: 3px; padding: 0 11px 0 3px; }
.ask input { border: 0; background: none; flex: 1; min-width: 0; padding: 0; color: #000; text-indent: -6px; outline: 0; }
.ask svg { width: 16px; height: 16px; fill: none; stroke: #aaa; stroke-width: 2; }
.avatar { width: 24px; height: 24px; margin-left: 9px; }
.usericons { display: flex; align-items: center; gap: 14px; padding: 0 5px 0 25px; }
.help { display: flex; align-items: center; gap: 2px; font-size: 22px; color: #4f596b; width: 24px; margin-right: -5px; }
.chev { margin-left: -4px; }

/* ribbon */
.ribbon { display: flex; height: 148px; border-bottom: 2px solid #ddd; flex: none; padding-top: 3px; }
.group { display: flex; flex-direction: column; flex: none; }
.group + .group { border-left: 1px solid #ddd; }
.tools { display: flex; height: 106px; }
.glabel { height: 38px; display: flex; align-items: center; justify-content: center; gap: 10px; color: #333; }
.tool { display: flex; align-items: center; height: 35px; gap: 4px; white-space: nowrap; }
.tool .tri { margin-left: 4px; }
.tool .wider { margin-left: 7px; }
.g1 { width: 349px; padding-left: 22px; }
.g1 .big + .col { width: 147px; }
.g1 .glabel { margin-left: -14px; }
.big { display: flex; flex-direction: column; align-items: center; width: 40px; height: 106px; padding-top: 6px; flex: none; }
.g1 .big { margin-right: 17px; }
.cursor { width: 32px; height: 40px; margin-bottom: 12px; }
.g2 { width: 291px; padding-left: 12px; }
.g2 .col:first-child { width: 118px; }
.g3 { width: 331px; padding-left: 12px; }
.g3 .col:first-child { width: 101px; }
.g3 .col:nth-child(2) { width: 164px; }
.g4 { width: 170px; padding-left: 12px; }
.g4 .col:nth-child(-n+2) { width: 34px; }
.g4 .col:nth-child(3) { width: 48px; }
.g4 .tri, .g5 .tri { margin-left: 1px; }
.g5 { width: 100px; padding-left: 11px; }
.g5 .col:first-child { width: 48px; }
.g5 .glabel { margin-left: -9px; }
.g6 { width: 99px; padding-left: 10px; }
.g6 .tool { width: 30px; height: 33px; margin: 1px 2px 1px 0; justify-content: center; border-radius: 4px; }
.g6 .col + .col { margin-left: 1px; }
.g6 .glabel { margin-left: -5px; }
.g6 .active { background: #c3daf5; --w: #c3daf5; }
.g7 { width: 117px; }
.g7 .big { width: 92px; padding-top: 5px; }
.g7 .glabel { padding-left: 4px; }
.smart { width: 46px; height: 48px; margin-bottom: 6px; }
.g7 .big .tri { margin-top: 10px; }
.g8 { flex: 1 0 462px; padding-left: 12px; }
.g8 .col:nth-child(1) { width: 48px; }
.g8 .col:nth-child(2) { width: 34px; }
.g8 .col:nth-child(3) { width: 48px; }
.g8 .col:nth-child(3) .tri, .g8 .col:nth-child(1) .tri { margin-left: 0; }
.g8 .col:nth-child(4) { width: 148px; }
.g8 .glabel { justify-content: flex-start; padding-left: 163px; }
.g8 .glabel .tri { width: 10px; height: 8px; }
.chk { appearance: none; width: 21px; height: 21px; margin: 0; background: #2b7de2; border-radius: 2px; display: grid; place-items: center; }
.chk::after { content: ""; width: 6px; height: 12px; border: solid #fff; border-width: 0 2px 2px 0; transform: rotate(42deg); margin-top: -4px; }
/* the lookup column sits apart from the selection tools */
.g1 .col:last-child { margin-left: auto; margin-right: 21px; }

/* floor and component selectors */
.selectors { display: flex; gap: 5px; height: 39px; align-items: center; background: #f1f1f1; flex: none; padding-left: 3px; }
.selectors select { appearance: none; width: 149px; height: 33px; border: 1px solid #e0e0e0; border-radius: 4px; padding: 0 5px; font-size: 16px; outline: 0;
  background: #fff conic-gradient(from -34deg at 50% 100%, #555 68deg, transparent 0) no-repeat 132px 13px / 8px 6px; }

/* work area */
.work { display: flex; flex: 1 1 0; min-height: 0; }
.side { width: 747px; flex: none; display: flex; flex-direction: column; }
.strip { height: 17px; background: #e6e6e6; flex: none; border-bottom: 1px solid #ddd; }
.panels { display: flex; gap: 7px; flex: 1; min-height: 0; }
.nav { width: 315px; border: 1px solid #ddd; border-top: 0; display: flex; flex-direction: column; }
.nav h2 { height: 33px; line-height: 33px; padding-left: 12px; background: #f1f1f1; color: #808080; border-bottom: 1px solid #ddd; flex: none; }
.navbar { height: 43px; display: flex; align-items: center; padding-left: 12px; border-bottom: 1px solid #ddd; flex: none; }
.plus { width: 15px; height: 15px; stroke: #2b7de6; fill: none; stroke-width: 2; }
.listbtn { margin-left: 206px; width: 34px; height: 33px; background: #c3daf5; border-radius: 4px; padding: 6px; }
.listbtn svg { width: 16px; height: 20px; fill: none; stroke: #2b7de6; }
.treewrap { flex: 1; min-height: 0; overflow: hidden; display: flex; justify-content: space-between; }
.tree { padding: 4px 0 0 18px; }
.tree li { height: 36px; display: flex; align-items: center; gap: 11px; white-space: nowrap; }
.tree li > svg { width: 6px; height: 10px; color: #777; margin-top: -2px; }
.tree .openrow { gap: 9px; }
.tree .openrow > svg { width: 10px; height: 8px; margin-left: -2px; }
.leaf a { display: flex; align-items: center; gap: 11px; height: 32px; width: 105px; border-radius: 3px; padding-left: 4px; margin-left: 43px; }
.leaf .ic { width: 22px; height: 22px; }
.sel { background: #c3daf5; }
.navscroll { width: 12px; height: 577px; border-radius: 6px; background: #ccc; margin-right: 5px; }
.layers { width: 419px; border: 1px solid #ddd; padding-top: 474px; background: #fff; }
.layers table { width: 100%; border-collapse: collapse; table-layout: fixed; }
.layers td { height: 32px; border: 1px solid #ddd; padding: 0; }
.layers td:nth-child(1) { width: 75px; }
.layers td:nth-child(2) { width: 54px; padding-left: 8px; }
.layers td:nth-child(3) { padding-left: 6px; }
.box { appearance: none; width: 21px; height: 21px; border: 1px solid #777; border-radius: 3px; margin: 0 auto; display: block; background: #fff; }
.part { background: #7db5f7; border-color: #2b7de6; box-shadow: inset 0 0 0 2px #fff; }
.ex { width: 6px; height: 10px; margin: 0 auto; color: #777; }

/* drawing */
.canvas { flex: 1; min-width: 0; background: #000; position: relative; overflow: hidden; border-bottom: 1px solid #888; }
.drawing { width: 100%; height: 100%; }
.cad { font-family: Roboto, sans-serif; font-weight: 300; }
.blue { fill: #0a6ee0; font-size: 38px; }
.pink { fill: #d97070; font-size: 34px; }
.axis { fill: #fff; font-size: 24px; }
.ax { font-size: 24px; }
.viewbar { position: absolute; right: 0; top: 1px; width: 50px; background: #fff; border: 1px solid #ccc; display: flex; flex-direction: column; align-items: center; gap: 13px; padding: 18px 0 18px; }
.vi { width: 30px; height: 30px; }
.viewbar .tri { width: 10px; height: 7px; margin: -1px 0; color: #555; }
.viewbar .tri + .vi { margin-top: -2px; }
.viewbar hr { width: 36px; border: 0; border-top: 2px solid #777; margin: -2px 0 -4px; }
.v3d { position: relative; }
.v3d b { position: absolute; left: 3px; top: 12px; font-size: 13px; line-height: 16px; color: #2b7de6; }

/* status bar */
.status { height: 47px; display: flex; align-items: center; background: #fbfbfb; flex: none; padding-left: 3px; white-space: nowrap; }
.s-xy { width: 394px; }
.s-h, .s-h2 { width: 60px; }
.s-v { width: 65px; }
.s-v2 { width: 140px; }
.s-n { width: 154px; }
.s-hide { width: 54px; }
.s-z { width: 101px; }
.sbtns { display: flex; gap: 5px; }
.sbtns button { width: 37px; height: 37px; border: 1px solid #999; border-radius: 4px; background: #fff; display: flex; align-items: center; justify-content: center; gap: 8px; }
.sbtns .wide { width: 54px; }
.sbtns .on { background: #d5e5fb; border-color: #2b7de6; --w: #d5e5fb; }
.sbtns .gapl { margin-left: 4px; }
.sbtns .faint { --g: #888; border-color: #bbb; }
.sbtns .ic { width: 22px; height: 22px; }

/* taskbar */
.taskbar { height: 60px; flex: none; display: flex; align-items: center; color: #000;
  background: linear-gradient(90deg, #e3e8c8 0, #e3e8c8 72px, #d8e1ea 588px, #ecdfd0 640px, #dbe1e6 700px, #dde0dc 780px, #dde8dc 860px, #d8eae3 960px, #e2eae6 1060px, #ece9e6 1150px, #e6d9ce 1240px, #eadfd5 1600px, #e6ddd4 1800px, #dadad8 100%); }
.start { width: 72px; height: 60px; padding-left: 24px; }
.start svg { width: 24px; height: 24px; }
.tsearch { width: 516px; height: 60px; border: 2px solid #ccc; background: #fff; display: flex; align-items: center; padding-left: 16px; gap: 17px; }
.tsearch svg { width: 24px; height: 24px; fill: none; stroke: #000; stroke-width: 1.5; }
.tsearch input { font-size: 24px; border: 0; flex: 1; padding: 0; outline: 0; background: none; }
.tsearch input::placeholder { color: #333; opacity: 1; }
.tb { width: 75px; height: 60px; display: grid; place-items: center; }
.s24 { width: 24px; height: 24px; }
.s36 { width: 36px; height: 36px; }
.app { width: 73px; background: #f3f7f3; border-bottom: 3px solid #0078d7; box-shadow: inset -5px 0 #d4e3dc; }
.taskbar .tb:nth-of-type(2) { width: 72px; }
.power { position: relative; margin-left: 203px; width: 64px; height: 36px; border: 1px solid #777; border-radius: 2px; background: #fff; padding: 3px; }
.power span { display: block; height: 28px; border: 1px solid #777; background: linear-gradient(90deg, #159447 56%, #a3988f 0); color: #fff; text-align: center; line-height: 24px; }
.power::after { content: ""; position: absolute; right: -5px; top: 8px; width: 5px; height: 18px; background: #fff; border: 1px solid #777; border-left: 0; }
.weather { width: 32px; height: 26px; margin-left: 140px; }
.temp { font-size: 21px; margin-left: 15px; width: 120px; white-space: nowrap; }
.tray { display: flex; align-items: center; gap: 12px; margin-left: 7px; font-size: 21px; }
.tray svg { fill: none; stroke: #000; stroke-width: 1.5; }
.tray b { font-weight: 500; margin-right: 9px; }
.t18 { width: 18px; height: 24px; margin-right: 3px; }
.t24 { width: 24px; height: 24px; }
.ime { background: #fff; border: 1px solid #555; line-height: 24px; height: 28px; width: 24px; text-indent: 1px; }
.clock { display: flex; flex-direction: column; align-items: center; width: 90px; margin-left: 27px; font-size: 19px; line-height: 28px; }
.notif { width: 26px; height: 24px; fill: none; stroke: #000; stroke-width: 1.5; margin-left: 30px; }
.desk { margin-left: auto; width: 8px; height: 60px; border-left: 1px solid #aaa; }

/* recording level meter docked at the window edge */
.meter { position: absolute; right: 0; top: 50px; width: 15px; height: 88px; border-radius: 7px 0 0 4px; background: #5d6375; border: 2px solid #41454f; border-right: 0; }
.grille { width: 7px; height: 14px; margin: 8px 0 0 4px; background: repeating-linear-gradient(#333845 0 2px, #5d6375 2px 4px); }
.tube { width: 13px; height: 76px; margin-top: 2px; border: 4px solid #4a4d53; border-radius: 7px; background: linear-gradient(#8a8d96 10px, transparent 10px 31px, #fb6e1c 31px), repeating-linear-gradient(#d9db80 0 2px, #8d9a7a 2px 4px); }

/* dialog */
.dialog { position: absolute; left: 243px; top: 163px; width: 932px; height: 599px; border: 1px solid #bbb; background: rgba(255, 255, 255, .89); backdrop-filter: blur(10px); box-shadow: 0 4px 14px rgba(0, 0, 0, .35); display: flex; flex-direction: column; padding: 0 19px 0 17px; }
.dhead { display: flex; justify-content: space-between; align-items: center; height: 53px; }
.dhead h2 { font-size: 21px; }
.x { width: 16px; height: 16px; }
.x svg { width: 16px; height: 16px; stroke: #777; stroke-width: 2; }
.dopts { display: flex; align-items: center; height: 38px; padding-left: 11px; gap: 10px; color: #222; }
.dopts label { display: flex; align-items: center; gap: 6px; white-space: nowrap; }
.dopts input { appearance: none; width: 21px; height: 21px; margin: 0; border: 1px solid #777; border-radius: 50%; background: #fff; }
.dopts input:checked { background: radial-gradient(#2b7de2 5px, #fff 6px); }
.btn { width: 149px; height: 38px; border: 1px solid #ccc; border-radius: 4px; background: #fff; color: #333; }
.copyb { margin-left: auto; }
.gridbox { display: flex; justify-content: space-between; background: #fff; border: 1px solid #ccc; height: 427px; margin-top: 12px; overflow: hidden; }
.grid { border-collapse: collapse; table-layout: fixed; width: 853px; height: 100px; }
.c0 { width: 39px; } .c1 { width: 114px; } .c3 { width: 121px; } .c6 { width: 159px; } .c7 { width: 62px; }
.grid th, .grid td { height: 36px; padding: 0 0 2px 5px; border: 1px solid #d0d0d0; white-space: nowrap; text-align: left; font-weight: 400; }
.grid th { background: #efefef; text-align: center; padding: 0; }
.grid thead th { height: 32px; border-top: 0; }
.grid tr > :first-child { border-left: 0; }
.grid .hot { background: #80b8f8; color: #fff; font-weight: 700; }
.grid .cur { outline: 2px solid #777; outline-offset: -2px; }
.thumb { width: 12px; height: 64px; border-radius: 6px; background: #ccc; margin: 266px 5px 0 0; }
.dfoot { display: flex; align-items: center; margin-top: 8px; height: 41px; }
.dfoot p { flex: 1; }
.primary { width: 120px; height: 40px; background: #2b7de2; border-color: #2b7de2; color: #fff; margin-right: 11px; }
.cancel { width: 118px; }
.grip { position: absolute; right: 4px; bottom: 4px; width: 12px; height: 12px; fill: #777; }
```
